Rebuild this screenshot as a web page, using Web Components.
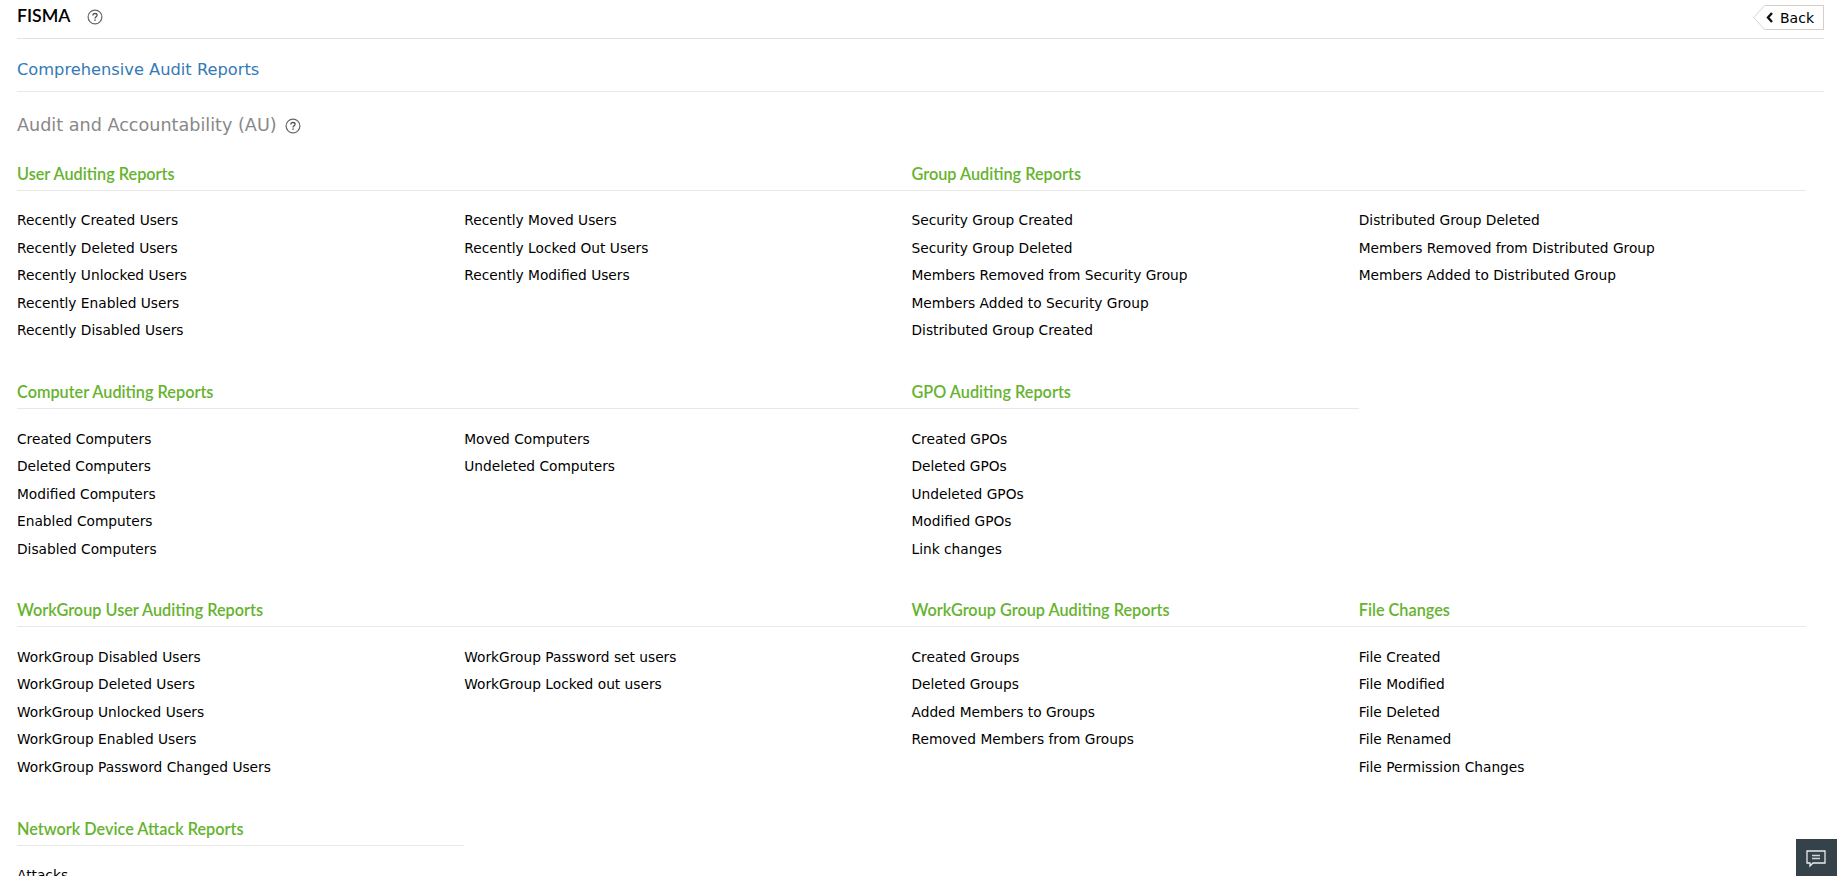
<!DOCTYPE html>
<html><head><meta charset="utf-8"><style>
html,body{margin:0;padding:0;height:100%;overflow:hidden;background:#fff}
body{font-family:"DejaVu Sans",sans-serif;color:#000}
</style></head><body>
<template id="help-t"><style>:host{display:inline-flex;vertical-align:middle}svg{display:block}</style>
<svg width="16" height="16" viewBox="0 0 16 16" fill="none"><circle cx="8" cy="8" r="6.9" stroke="#666" stroke-width="1.2"/><path d="M5.9 6.4c0-1.2.9-1.9 2.1-1.9s2.1.7 2.1 1.8c0 1.6-2.1 1.5-2.1 3.1" stroke="#555" stroke-width="1.3"/><rect x="7.3" y="10.4" width="1.4" height="1.4" fill="#555"/></svg></template>

<template id="bar-t"><style>
:host{display:flex;align-items:center;justify-content:space-between;height:39px;box-sizing:border-box;border-bottom:1px solid #e3e3e3;margin:0 18px 0 17px}
.t{display:flex;align-items:center;font:600 17.7px Lato,sans-serif;color:#000;margin-top:-8px}
fis-help{margin:3px 0 0 17px}
.back{position:relative;display:flex;align-items:center;gap:6px;height:25px;width:59px;box-sizing:border-box;margin-top:-3px;padding:0 0 0 1px;border:1px solid #d9cdc4;border-left:0;font:14px "DejaVu Sans",sans-serif;color:#000;background:#fff}
.back svg.tip{position:absolute;left:-12px;top:-1px}
</style>
<div class="t"><slot></slot><fis-help></fis-help></div>
<div class="back"><svg class="tip" width="12" height="25" viewBox="0 0 12 25" fill="none"><path d="M12 .5H11.5L.8 12.5 11.5 24.5H12" stroke="#d9d4cf"/></svg><svg width="8" height="11" viewBox="0 0 8 11"><path d="M6 1 2 5.5 6 10" fill="none" stroke="#111" stroke-width="2.4"/></svg>Back</div>
</template>

<template id="sub-t"><style>
:host{display:block;margin:0 18px 0 17px;height:53px;box-sizing:border-box;border-bottom:1px solid #e8e8e8;padding-top:23px;font:16.25px/1 "DejaVu Sans",sans-serif;color:#337ab7}
</style><slot></slot></template>

<template id="title-t"><style>
:host{display:flex;align-items:center;margin:0 0 0 17px;height:66px;font:17.6px "DejaVu Sans",sans-serif;color:#888}
fis-help{margin:1px 0 0 8px}
</style><slot></slot><fis-help></fis-help></template>

<template id="grid-t"><style>
:host{display:grid;grid-template-columns:repeat(4,447.25px);margin-left:17px;row-gap:0;padding-top:7px}
</style><slot></slot></template>

<template id="sec-t"><style>
:host{display:block;height:218.2px;box-sizing:border-box}
.h{font:600 16.25px/1 Lato,sans-serif;color:#65b32e;height:26px;box-sizing:border-box;padding-top:1px;border-bottom:1px solid #e8e8e8}
.b{display:grid;grid-auto-flow:column;grid-template-rows:repeat(5,27.5px);padding-top:16.4px;grid-auto-columns:447.25px}
</style><div class="h"></div><div class="b"><slot></slot></div></template>

<template id="item-t"><style>
:host{display:block;font:13.75px/27.5px "DejaVu Sans",sans-serif;color:#000;white-space:nowrap}
</style><slot></slot></template>

<template id="chat-t"><style>
:host{position:fixed;right:5px;bottom:0;width:41px;height:37px;background:#36424a;display:flex;align-items:center;justify-content:center}
svg{margin:3px 2px 0 0}
</style><svg width="20" height="18" viewBox="0 0 20 18" fill="none"><path d="M1 1h18v12H7l-3 3v-3H1z" stroke="#e8ecee" stroke-width="1.3"/><path d="M6 5.5h8M6 8.5h8" stroke="#cfd6da" stroke-width="1.4"/></svg></template>

<fis-bar>FISMA</fis-bar>
<fis-sub>Comprehensive Audit Reports</fis-sub>
<fis-title>Audit and Accountability (AU)</fis-title>
<fis-grid id="g"></fis-grid>
<fis-chat></fis-chat>

<script>
function def(tag,tid,extra){customElements.define(tag,class extends HTMLElement{
 constructor(){super();this.attachShadow({mode:'open'}).appendChild(document.getElementById(tid).content.cloneNode(true));}
 connectedCallback(){if(extra)extra(this);}
});}
def('fis-help','help-t');def('fis-bar','bar-t');def('fis-sub','sub-t');def('fis-title','title-t');def('fis-grid','grid-t');def('fis-item','item-t');def('fis-chat','chat-t');
def('fis-sec','sec-t',e=>{e.shadowRoot.querySelector('.h').textContent=e.getAttribute('heading');e.style.gridColumn='span '+(e.getAttribute('span')||1);});
const data=[
["User Auditing Reports",2,["Recently Created Users","Recently Deleted Users","Recently Unlocked Users","Recently Enabled Users","Recently Disabled Users","Recently Moved Users","Recently Locked Out Users","Recently Modified Users"]],
["Group Auditing Reports",2,["Security Group Created","Security Group Deleted","Members Removed from Security Group","Members Added to Security Group","Distributed Group Created","Distributed Group Deleted","Members Removed from Distributed Group","Members Added to Distributed Group"]],
["Computer Auditing Reports",2,["Created Computers","Deleted Computers","Modified Computers","Enabled Computers","Disabled Computers","Moved Computers","Undeleted Computers"]],
["GPO Auditing Reports",1,["Created GPOs","Deleted GPOs","Undeleted GPOs","Modified GPOs","Link changes"]],
[null],
["WorkGroup User Auditing Reports",2,["WorkGroup Disabled Users","WorkGroup Deleted Users","WorkGroup Unlocked Users","WorkGroup Enabled Users","WorkGroup Password Changed Users","WorkGroup Password set users","WorkGroup Locked out users"]],
["WorkGroup Group Auditing Reports",1,["Created Groups","Deleted Groups","Added Members to Groups","Removed Members from Groups"]],
["File Changes",1,["File Created","File Modified","File Deleted","File Renamed","File Permission Changes"]],
["Network Device Attack Reports",1,["Attacks"]]];
const g=document.getElementById('g');
for(const d of data){
 if(!d[0]){g.appendChild(document.createElement('div'));continue;}
 const s=document.createElement('fis-sec');s.setAttribute('heading',d[0]);s.setAttribute('span',d[1]);
 for(const t of d[2]){const i=document.createElement('fis-item');i.textContent=t;s.appendChild(i);}
 g.appendChild(s);
}
</script>
</body></html>
